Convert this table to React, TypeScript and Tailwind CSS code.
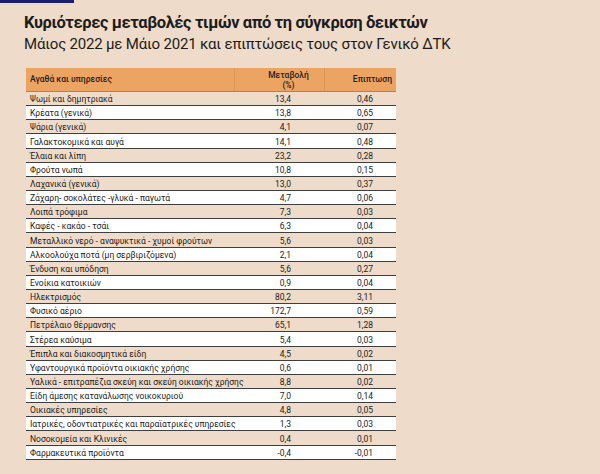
import React from 'react';

type Row = { name: string; change: string; impact: string };

const rows: Row[] = [
  { name: 'Ψωμί και δημητριακά', change: '13,4', impact: '0,46' },
  { name: 'Κρέατα (γενικά)', change: '13,8', impact: '0,65' },
  { name: 'Ψάρια (γενικά)', change: '4,1', impact: '0,07' },
  { name: 'Γαλακτοκομικά και αυγά', change: '14,1', impact: '0,48' },
  { name: 'Έλαια και λίπη', change: '23,2', impact: '0,28' },
  { name: 'Φρούτα νωπά', change: '10,8', impact: '0,15' },
  { name: 'Λαχανικά (γενικά)', change: '13,0', impact: '0,37' },
  { name: 'Ζάχαρη- σοκολάτες -γλυκά - παγωτά', change: '4,7', impact: '0,06' },
  { name: 'Λοιπά τρόφιμα', change: '7,3', impact: '0,03' },
  { name: 'Καφές - κακάο - τσάι', change: '6,3', impact: '0,04' },
  { name: 'Μεταλλικό νερό - αναψυκτικά - χυμοί φρούτων', change: '5,6', impact: '0,03' },
  { name: 'Αλκοολούχα ποτά (μη σερβιριζόμενα)', change: '2,1', impact: '0,04' },
  { name: 'Ένδυση και υπόδηση', change: '5,6', impact: '0,27' },
  { name: 'Ενοίκια κατοικιών', change: '0,9', impact: '0,04' },
  { name: 'Ηλεκτρισμός', change: '80,2', impact: '3,11' },
  { name: 'Φυσικό αέριο', change: '172,7', impact: '0,59' },
  { name: 'Πετρέλαιο θέρμανσης', change: '65,1', impact: '1,28' },
  { name: 'Στέρεα καύσιμα', change: '5,4', impact: '0,03' },
  { name: 'Έπιπλα και διακοσμητικά είδη', change: '4,5', impact: '0,02' },
  { name: 'Υφαντουργικά προϊόντα οικιακής χρήσης', change: '0,6', impact: '0,01' },
  { name: 'Υαλικά - επιτραπέζια σκεύη και σκεύη οικιακής χρήσης', change: '8,8', impact: '0,02' },
  { name: 'Είδη άμεσης κατανάλωσης νοικοκυριού', change: '7,0', impact: '0,14' },
  { name: 'Οικιακές υπηρεσίες', change: '4,8', impact: '0,05' },
  { name: 'Ιατρικές, οδοντιατρικές και παραϊατρικές υπηρεσίες', change: '1,3', impact: '0,03' },
  { name: 'Νοσοκομεία και Κλινικές', change: '0,4', impact: '0,01' },
  { name: 'Φαρμακευτικά προϊόντα', change: '-0,4', impact: '-0,01' },
];

export default function App() {
  return (
    <div className="w-[600px] h-[474px] overflow-hidden bg-[#eedbc9] font-['Roboto',sans-serif] text-[#1c1c1c]">
      <div className="w-[74px] h-[3px] bg-[#1b1d6d]" />

      {/* Title */}
      <div className="pl-[24px] pt-[9px]">
        <h1 className="text-[16.5px] leading-[22px] font-bold tracking-[-0.4px]">
          Κυριότερες μεταβολές τιμών από τη σύγκριση δεικτών
        </h1>
        <p className="text-[15px] leading-[20px] tracking-[-0.2px]">
          Μάιος 2022 με Μάιο 2021 και επιπτώσεις τους στον Γενικό ΔΤΚ
        </p>
      </div>

      {/* Table */}
      <div className="ml-[26px] mt-[14px] w-[370px]">
        <div className="grid grid-cols-[209px_90px_71px] h-[24px] bg-[#eba462] border-b border-[#b9804b] text-[8.5px] font-medium text-[#222]">
          <div className="flex items-center pl-[4px] border-r border-[#dc9656]">Αγαθά και υπηρεσίες</div>
          <div className="flex flex-col items-center justify-center leading-[10px] pl-[18px] border-r border-[#dc9656]">
            <span>Μεταβολή</span>
            <span>(%)</span>
          </div>
          <div className="flex items-center justify-end pr-[4px]">Επιπτωση</div>
        </div>
        {rows.map((r, i) => (
          <div
            key={i}
            className={`grid grid-cols-[209px_90px_71px] h-[14.15px] items-end border-b border-[#3f3f3f] text-[8.5px] leading-[11px] ${
              i % 2 === 1 ? 'bg-white' : ''
            }`}
          >
            <div className="pl-[4px] whitespace-nowrap">{r.name}</div>
            <div className="text-right pr-[34px]">{r.change}</div>
            <div className="text-right pr-[23px]">{r.impact}</div>
          </div>
        ))}
      </div>
    </div>
  );
}
